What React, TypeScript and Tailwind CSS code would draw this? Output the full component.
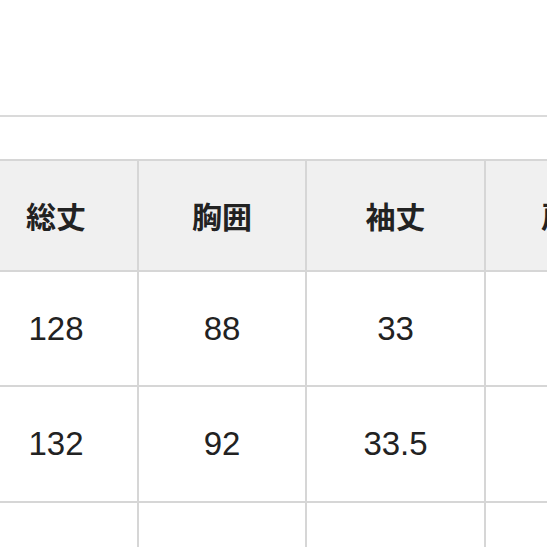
const headers = ["総丈", "胸囲", "袖丈", "肩幅"];

// last column runs off the right edge; only its header shows
const rows = [
  { key: "s", cells: ["128", "88", "33", ""], h: "h-[113px]" },
  { key: "m", cells: ["132", "92", "33.5", ""], h: "h-[114px]" },
  { key: "l", cells: ["", "", "", ""], h: "h-[114px]" },
];

export default function App() {
  return (
    <div className="h-[547px] w-[547px] overflow-hidden bg-white font-['Liberation_Sans','Noto_Sans_CJK_JP',sans-serif] text-[#222]">
      <div className="mt-[115px] h-[2px] w-full bg-[#dadada]" />

      <div className="ml-[-25px] mt-[42px] grid w-max grid-cols-[162px_166px_177px_170px] gap-[2px] border-t-2 border-[#d6d6d6] bg-[#d6d6d6]">
        {headers.map((h) => (
          <div
            key={h}
            className="flex h-[109px] items-center justify-center bg-[#f0f0f0] font-['Noto_Sans_CJK_JP',sans-serif] text-[30px] font-bold"
          >
            {h}
          </div>
        ))}

        {rows.map((row) =>
          row.cells.map((c, i) => (
            <div
              key={row.key + i}
              className={`flex ${row.h} items-center justify-center bg-white text-[33px]`}
            >
              {c}
            </div>
          ))
        )}
      </div>
    </div>
  );
}
